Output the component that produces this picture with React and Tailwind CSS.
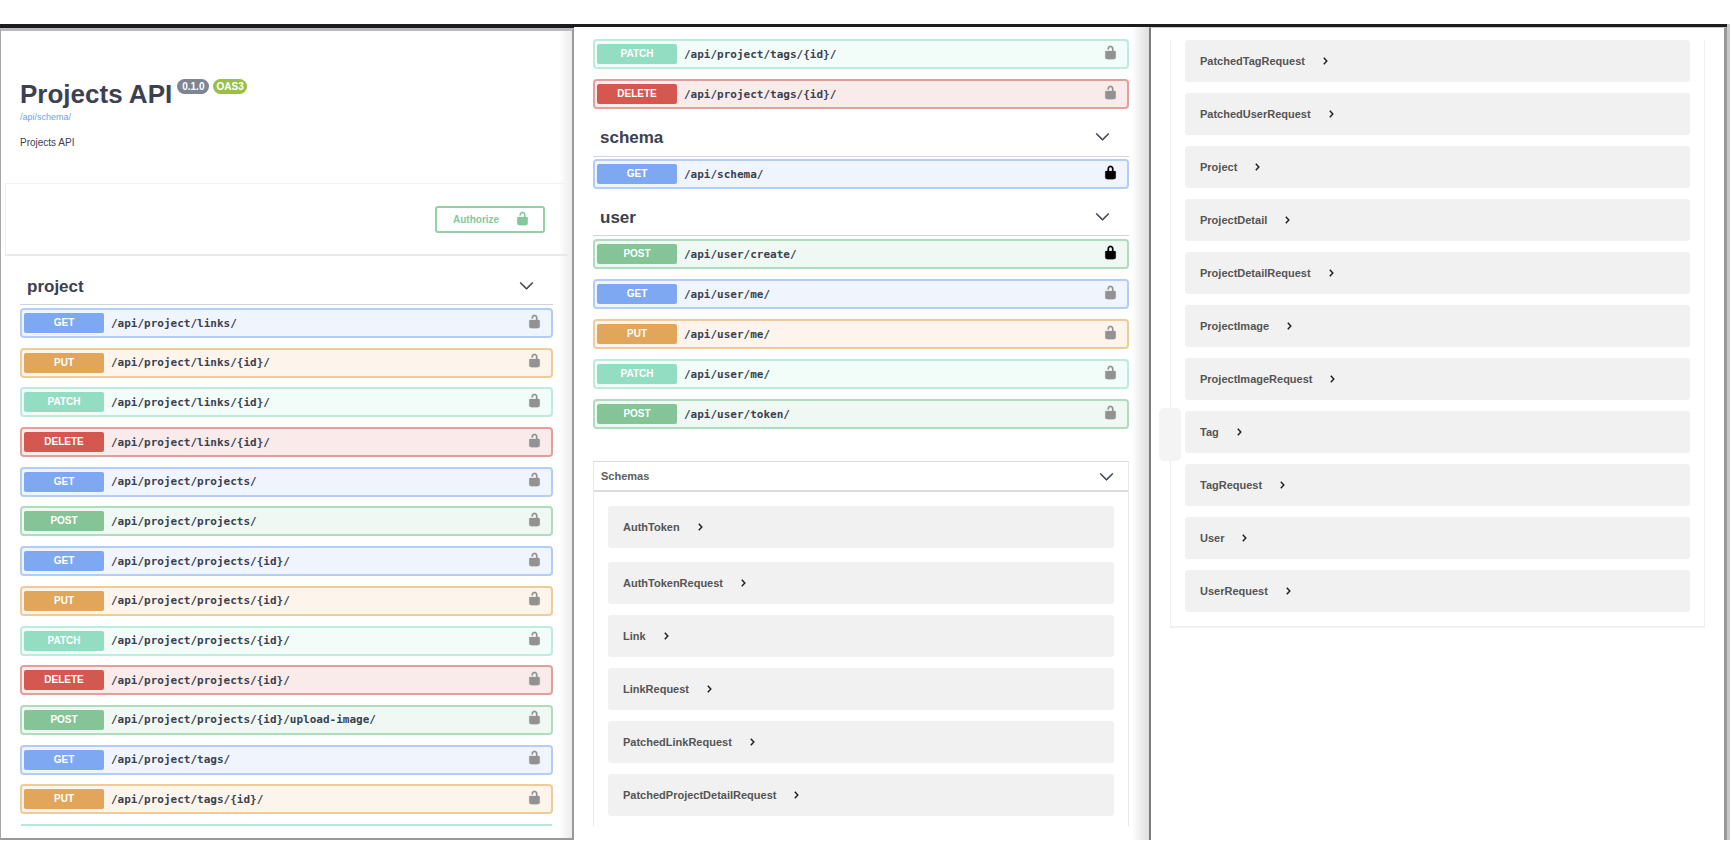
const METHODS = {
  GET: { row: "border-[#b3cdf9] bg-[#f0f5fd]", badge: "bg-[#7fa8f2]" },
  POST: { row: "border-[#aedcbd] bg-[#eff8f3]", badge: "bg-[#84c497]" },
  PUT: { row: "border-[#efcb98] bg-[#fdf5eb]", badge: "bg-[#e2a65a]" },
  PATCH: { row: "border-[#bdecdc] bg-[#f2fcf9]", badge: "bg-[#93ddc2]" },
  DELETE: { row: "border-[#e39f9a] bg-[#f8ebea]", badge: "bg-[#d4584f]" },
};

const projectOps = [
  ["GET", "/api/project/links/"],
  ["PUT", "/api/project/links/{id}/"],
  ["PATCH", "/api/project/links/{id}/"],
  ["DELETE", "/api/project/links/{id}/"],
  ["GET", "/api/project/projects/"],
  ["POST", "/api/project/projects/"],
  ["GET", "/api/project/projects/{id}/"],
  ["PUT", "/api/project/projects/{id}/"],
  ["PATCH", "/api/project/projects/{id}/"],
  ["DELETE", "/api/project/projects/{id}/"],
  ["POST", "/api/project/projects/{id}/upload-image/"],
  ["GET", "/api/project/tags/"],
  ["PUT", "/api/project/tags/{id}/"],
];

const tagOps = [
  ["PATCH", "/api/project/tags/{id}/"],
  ["DELETE", "/api/project/tags/{id}/"],
];

const userOps = [
  ["POST", "/api/user/create/", true],
  ["GET", "/api/user/me/"],
  ["PUT", "/api/user/me/"],
  ["PATCH", "/api/user/me/"],
  ["POST", "/api/user/token/"],
];

const moreSchemas = ["AuthTokenRequest", "Link", "LinkRequest", "PatchedLinkRequest", "PatchedProjectDetailRequest"];

const lastSchemas = [
  "PatchedTagRequest",
  "PatchedUserRequest",
  "Project",
  "ProjectDetail",
  "ProjectDetailRequest",
  "ProjectImage",
  "ProjectImageRequest",
  "Tag",
  "TagRequest",
  "User",
  "UserRequest",
];

const LOCK_BODY =
  "H4c-.553 0-1 .646-1 1.199V17c0 .549.428 1.139.951 1.307l1.197.387C5.672 18.861 6.55 19 7.1 19h5.8c.549 0 1.428-.139 1.951-.307l1.196-.387c.524-.167.953-.757.953-1.306V9.199C17 8.646 16.352 8 15.8 8z";
const UNLOCKED =
  "M15.8 8H14V5.6C14 2.703 12.665 1 10 1 7.334 1 6 2.703 6 5.6V6h2v-.801C8 3.754 8.797 3 10 3c1.203 0 2 .754 2 2.199V8" + LOCK_BODY;
const LOCKED =
  "M15.8 8H14V5.6C14 2.703 12.665 1 10 1 7.334 1 6 2.703 6 5.6V8" +
  LOCK_BODY +
  "M12 8H8V5.199C8 3.754 8.797 3 10 3c1.203 0 2 .754 2 2.199V8z";

function Lock({ locked = false, className }) {
  return (
    <svg viewBox="0 0 20 20" className={className} fill="currentColor" stroke="currentColor" strokeWidth="0.3" fillRule="evenodd" aria-hidden="true">
      <path d={locked ? LOCKED : UNLOCKED} />
    </svg>
  );
}

function ChevronDown() {
  return (
    <svg viewBox="0 0 20 20" className="size-[15px] text-[#3b4151]" fill="currentColor" stroke="currentColor" strokeWidth="0.8" aria-hidden="true">
      <path d="M17.418 6.109c.272-.268.709-.268.979 0s.271.701 0 .969l-7.908 7.83c-.27.268-.707.268-.979 0l-7.908-7.83c-.27-.268-.27-.701 0-.969.271-.268.709-.268.979 0L10 13.25l7.418-7.141z" />
    </svg>
  );
}

function ChevronRight() {
  return (
    <svg viewBox="0 0 5 8" className="mt-px h-2 w-[5px]" fill="none" stroke="#222" strokeWidth="1.5" aria-hidden="true">
      <path d="M0.8 0.8 L3.8 4 L0.8 7.2" />
    </svg>
  );
}

function Operation({ method, path, locked }) {
  const look = METHODS[method];
  return (
    <li className={"flex h-[30px] items-center rounded-[4px] border-2 pr-[9px] pl-[2px] " + look.row}>
      <button type="button" className="flex flex-1 items-center gap-[7px] text-left">
        <span className={"w-20 rounded-xs text-center text-[10px] leading-5 font-bold text-white " + look.badge}>{method}</span>
        <span className="pt-px font-['DejaVu_Sans_Mono',monospace] text-[11px] leading-5 font-bold text-[#3b4151]">{path}</span>
      </button>
      <button type="button" aria-label={locked ? "Authorized" : "Not authorized"} className="-mt-1">
        <Lock locked={locked} className={locked ? "size-[15px] text-black" : "size-[15px] text-[#929292]"} />
      </button>
    </li>
  );
}

function OperationList({ items, className }) {
  return (
    <ul className={className}>
      {items.map(([method, path, locked]) => (
        <Operation key={method + path} method={method} path={path} locked={locked} />
      ))}
    </ul>
  );
}

function TagHeading({ children, className }) {
  return (
    <h2 className={"flex items-center justify-between border-b border-[#d0d3da] pr-[19px] pl-[7px] text-[17px] leading-4 font-bold text-[#3b4151] " + className}>
      <span className="pt-1">{children}</span>
      <button type="button" aria-label="Collapse">
        <ChevronDown />
      </button>
    </h2>
  );
}

function Model({ name }) {
  return (
    <li className="h-[42px] rounded-[3px] bg-[#f1f1f1] px-[15px]">
      <button type="button" className="flex h-full items-center gap-[18px] pb-px text-[11px] leading-4 font-bold text-[#555]">
        {name}
        <ChevronRight />
      </button>
    </li>
  );
}

export default function App() {
  return (
    <div className="flex min-h-screen flex-col bg-white pt-6 pb-[25px] font-['Liberation_Sans',Arial,sans-serif]">
      <main className="grid flex-1 grid-cols-[574fr_575fr_581fr]">
        <section className="flex flex-col border-t-4 border-[#1c1c1e]">
          <div className="flex flex-1 flex-col border-t-[3px] border-r-2 border-b-2 border-l border-t-[#b9b9bf] border-r-[#9a9a9a] border-b-[#999999] border-l-[#a8a8a8] bg-[linear-gradient(to_left,#ebebeb,#ffffff_13px)]">
            <header className="px-[19px] pt-[47px]">
              <div className="flex items-start gap-[5px]">
                <h1 className="text-[26px] leading-[33px] font-bold text-[#3b4151]">Projects API</h1>
                <div className="flex gap-1 pt-px text-[10px] leading-[15px] font-bold text-white">
                  <span className="rounded-full bg-[#7d8492] px-[5px]">0.1.0</span>
                  <span className="rounded-full bg-[#99bf48] px-[3px]">OAS3</span>
                </div>
              </div>
              <a href="/api/schema/" className="block text-[9px] leading-3 text-[#6f9ff0]">
                /api/schema/
              </a>
              <p className="mt-3 text-[10px] leading-4 text-[#3b4151]">Projects API</p>
            </header>
            <div className="mt-8 mr-1 ml-1 flex h-[73px] items-center justify-end border border-b-2 border-[#f3f3f3] border-b-[#e8e8e8] pr-[22px]">
              <button type="button" className="flex h-[27px] w-[110px] items-center justify-between rounded-[3px] border-2 border-[#93d0a8] pr-[13px] pl-4 text-[10px] font-bold text-[#84c89c]">
                Authorize
                <Lock className="-mt-[2px] size-[15px]" />
              </button>
            </div>
            <div className="flex flex-1 flex-col pr-[19px] pb-3 pl-[19px]">
              <TagHeading className="pt-[19px] pb-[9px]">project</TagHeading>
              <div className="flex flex-1 flex-col justify-between pt-[3px]">
                <OperationList items={projectOps} className="contents" />
                <div className="mx-px h-[2px] bg-[#b3e9d6]" />
              </div>
            </div>
          </div>
        </section>

        <section className="flex flex-col border-t-[3px] border-[#1c1c1e]">
          <div className="flex-1 bg-[linear-gradient(to_left,#dedede,#ffffff_17px)] pt-3 pr-[20px] pb-[14px] pl-[19px]">
            <OperationList items={tagOps} className="flex flex-col gap-[10px]" />
            <TagHeading className="pt-[17px] pb-[10px]">schema</TagHeading>
            <OperationList items={[["GET", "/api/schema/", true]]} className="pt-[2px]" />
            <TagHeading className="pt-[17px] pb-[9px]">user</TagHeading>
            <OperationList items={userOps} className="flex flex-col gap-[10px] pt-[3px]" />
            <div className="mt-8 border-x border-t border-x-[#e8e8e8] border-t-[#d8d8d8] bg-white pb-[10px]">
              <h3 className="flex h-[30px] items-center justify-between border-b-2 border-[#dcdcdc] pr-[14px] pl-[7px] text-[11px] font-bold text-[#606060]">
                <span>Schemas</span>
                <button type="button" aria-label="Collapse">
                  <ChevronDown />
                </button>
              </h3>
              <ul className="px-[14px] pt-[14px]">
                <Model name="AuthToken" />
              </ul>
              <ul className="flex flex-col gap-[11px] px-[14px] pt-[14px]">
                {moreSchemas.map((name) => (
                  <Model key={name} name={name} />
                ))}
              </ul>
            </div>
          </div>
        </section>

        <section className="flex">
          <div className="flex flex-1 flex-col border-t-[3px] border-[#1c1c1e]">
            <div className="relative flex-1 border-t border-r-[3px] border-l-2 border-t-[#c8c8c8] border-r-[#999999] border-l-[#7c7c7c] pt-3 pr-[19px] pl-[19px]">
              <div className="absolute top-[380px] left-2 h-[53px] w-[22px] rounded-[5px] bg-[#f4f4f4]" />
              <ul className="flex flex-col gap-[11px] border-x border-b-2 border-[#f0f0f0] px-[14px] pb-[14px]">
                {lastSchemas.map((name) => (
                  <Model key={name} name={name} />
                ))}
              </ul>
            </div>
          </div>
          <div className="w-[3px] bg-[#c9c9cd]" />
        </section>
      </main>
    </div>
  );
}
